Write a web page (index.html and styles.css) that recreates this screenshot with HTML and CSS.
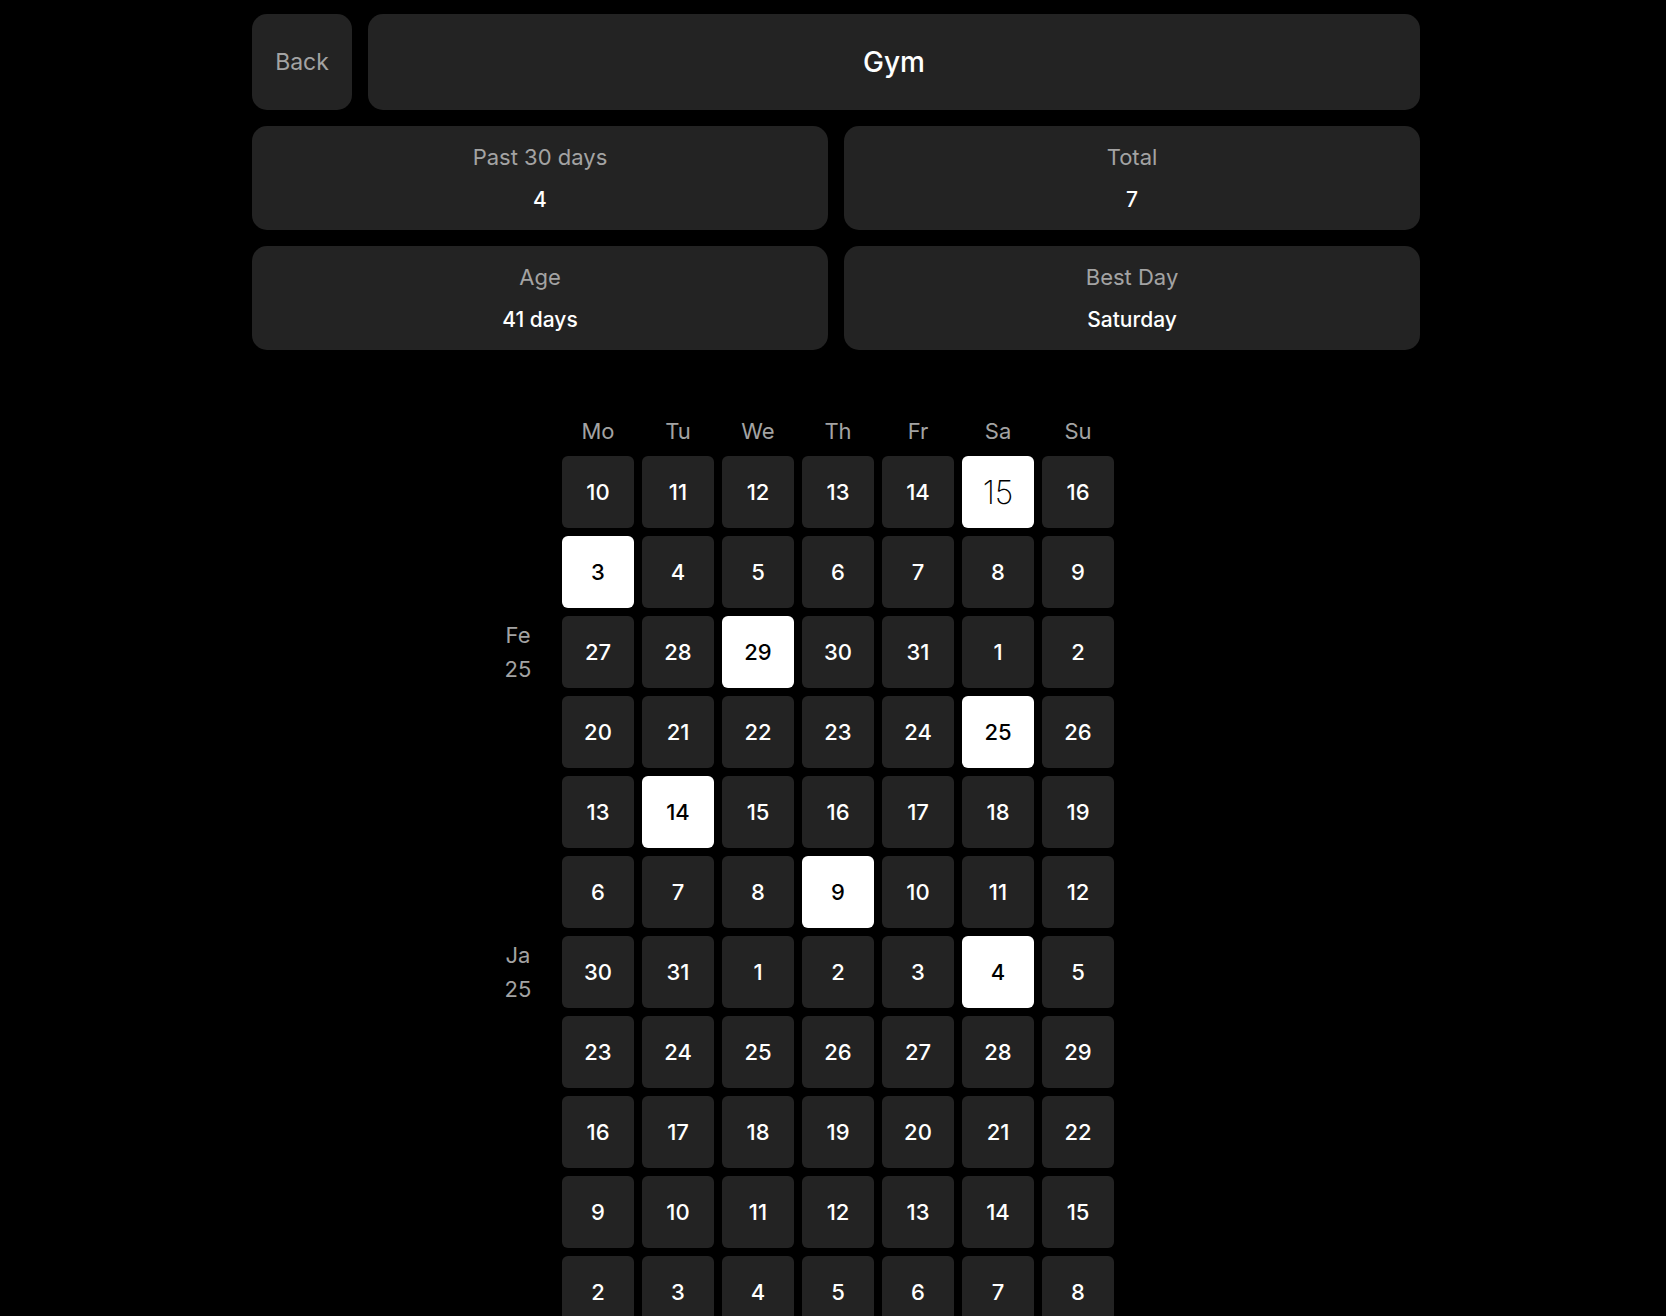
FILE: index.html
```html
<!DOCTYPE html>
<html lang="en">
<head>
  <meta charset="UTF-8">
  <title>Gym</title>
  <link rel="stylesheet" href="styles.css">
</head>
<body>
  <div class="page">
    <div class="top-row">
      <button type="button" class="back-btn">Back</button>
      <div class="title-box">Gym</div>
    </div>

    <div class="stats">
      <div class="stat"><div class="stat-label">Past 30 days</div><div class="stat-value">4</div></div>
      <div class="stat"><div class="stat-label">Total</div><div class="stat-value">7</div></div>
      <div class="stat"><div class="stat-label">Age</div><div class="stat-value">41 days</div></div>
      <div class="stat"><div class="stat-label">Best Day</div><div class="stat-value">Saturday</div></div>
    </div>

    <div class="calendar" id="calendar">
      <div class="month"></div>
      <div class="dow">Mo</div><div class="dow">Tu</div><div class="dow">We</div><div class="dow">Th</div><div class="dow">Fr</div><div class="dow">Sa</div><div class="dow">Su</div>
    </div>
  </div>

  <script>
  const weeks = [
    { days: [10, 11, 12, 13, 14, 15, 16], done: [5], today: 5 },
    { days: [3, 4, 5, 6, 7, 8, 9], done: [0] },
    { days: [27, 28, 29, 30, 31, 1, 2], done: [2], month: ["Fe", "25"] },
    { days: [20, 21, 22, 23, 24, 25, 26], done: [5] },
    { days: [13, 14, 15, 16, 17, 18, 19], done: [1] },
    { days: [6, 7, 8, 9, 10, 11, 12], done: [3] },
    { days: [30, 31, 1, 2, 3, 4, 5], done: [5], month: ["Ja", "25"] },
    { days: [23, 24, 25, 26, 27, 28, 29], done: [] },
    { days: [16, 17, 18, 19, 20, 21, 22], done: [] },
    { days: [9, 10, 11, 12, 13, 14, 15], done: [] },
    { days: [2, 3, 4, 5, 6, 7, 8], done: [] }
  ];

  const cal = document.getElementById("calendar");
  weeks.forEach((w) => {
    const label = document.createElement("div");
    label.className = "month";
    if (w.month) label.innerHTML = w.month[0] + "<br>" + w.month[1];
    cal.appendChild(label);

    w.days.forEach((d, i) => {
      const cell = document.createElement("div");
      cell.className = "day";
      if (w.done.includes(i)) cell.classList.add("done");
      if (w.today === i) cell.classList.add("today");
      cell.textContent = d;
      cal.appendChild(cell);
    });
  });
  </script>
</body>
</html>
```

FILE: styles.css
```css
body {
  margin: 0;
  background-color: #000;
  color: #fff;
  font-family: Inter, "Noto Sans", sans-serif;
}
.page {
  width: 1168px;
  margin-left: 252px;
  padding-top: 14px;
}
.top-row {
  display: flex;
  gap: 16px;
  height: 96px;
}
.back-btn {
  width: 100px;
  background: #232323;
  border: none;
  border-radius: 15px;
  color: #a3a3a3;
  font-family: inherit;
  font-size: 23px;
  cursor: pointer;
}
.title-box {
  flex: 1;
  background: #232323;
  border-radius: 15px;
  display: flex;
  align-items: center;
  justify-content: center;
  font-size: 28px;
  font-weight: 500;
}
.stats {
  display: grid;
  grid-template-columns: 1fr 1fr;
  gap: 16px;
  margin-top: 16px;
}
.stat {
  box-sizing: border-box;
  height: 104px;
  padding-top: 1px;
  background: #232323;
  border-radius: 15px;
  display: flex;
  flex-direction: column;
  align-items: center;
  justify-content: center;
  gap: 13px;
}
.stat-label {
  color: #a3a3a3;
  font-size: 22px;
  line-height: 30px;
}
.stat-value {
  font-size: 21px;
  font-weight: 500;
  line-height: 30px;
}
.calendar {
  display: grid;
  grid-template-columns: repeat(8, 72px);
  grid-auto-rows: 72px;
  grid-template-rows: 32px;
  gap: 8px;
  margin-top: 66px;
  margin-left: 230px;
}
.dow {
  color: #a3a3a3;
  font-size: 22px;
  text-align: center;
  line-height: 30px;
}
.month {
  color: #a3a3a3;
  font-size: 22px;
  line-height: 34px;
  display: flex;
  align-items: center;
  justify-content: center;
  text-align: center;
}
.day {
  background: #232323;
  border-radius: 6px;
  display: flex;
  align-items: center;
  justify-content: center;
  font-size: 22px;
  font-weight: 500;
}
.day.done {
  background: #fff;
  color: #000;
}
.day.today {
  font-size: 32px;
  font-weight: 250;
}
```
